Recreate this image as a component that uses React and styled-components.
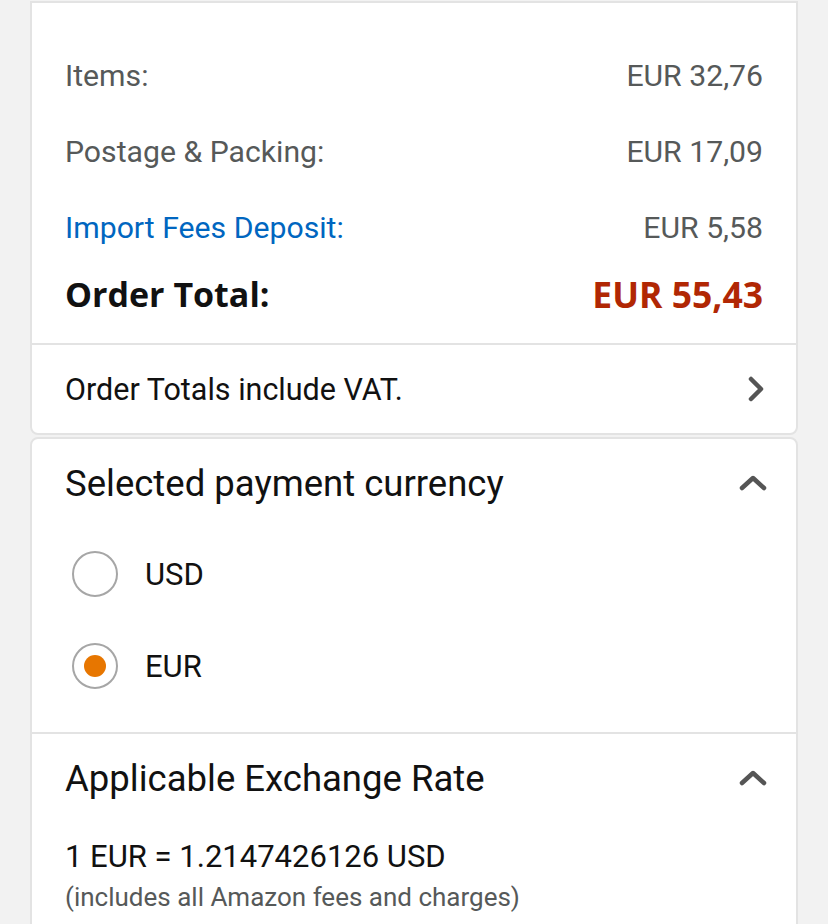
import React from "react";
import styled, { createGlobalStyle } from "styled-components";

const Global = createGlobalStyle`
  html, body { margin: 0; padding: 0; background: #f2f2f2; }
  body { font-family: Roboto, "Liberation Sans", sans-serif; -webkit-font-smoothing: antialiased; }
`;

const Page = styled.div`
  width: 828px;
  height: 924px;
  overflow: hidden;
  padding: 1px 30px 0 30px;
  box-sizing: border-box;
  display: flex;
  flex-direction: column;
  gap: 2px;
`;

const Card = styled.div`
  background: #fff;
  border: 2px solid #e3e3e3;
  border-radius: ${p => p.$top ? "0 0 8px 8px" : "8px 8px 0 0"};
  display: flex;
  flex-direction: column;
  flex-shrink: 0;
`;

const Summary = styled.div`
  padding: 34px 33px 20px 33px;
  display: flex;
  flex-direction: column;
`;

const Row = styled.div`
  display: flex;
  justify-content: space-between;
  align-items: center;
  height: ${p => p.$h || 76}px;
  font-family: ${p => p.$total ? '"Open Sans", Roboto, sans-serif' : 'Roboto, sans-serif'};
  font-size: ${p => p.$total ? 34 : 30.2}px;
  font-weight: ${p => p.$total ? 700 : 400};
  color: ${p => p.$total ? "#111" : "#565959"};
`;

const Label = styled.span`
  color: ${p => p.$link ? "#0066c0" : "inherit"};
`;

const Value = styled.span`
  color: ${p => p.$price ? "#b12704" : "inherit"};
  font-size: ${p => p.$price ? "35.5px" : "inherit"};
`;

const Divider = styled.div`
  height: 2px;
  background: #e3e3e3;
`;

const LinkRow = styled.div`
  height: 88px;
  padding: 0 33px;
  display: flex;
  align-items: center;
  justify-content: space-between;
  font-size: 30.5px;
  color: #111;
`;

const Section = styled.div`
  padding: 0 33px ${p => p.$pb || 0}px 33px;
  display: flex;
  flex-direction: column;
`;

const SectionHead = styled.div`
  height: 88px;
  display: flex;
  align-items: center;
  justify-content: space-between;
  font-size: 36.5px;
  color: #111;
`;

const RadioList = styled.div`
  display: flex;
  flex-direction: column;
  padding: 1px 0 20px 0;
`;

const RadioRow = styled.label`
  height: 92px;
  display: flex;
  align-items: center;
  gap: 27px;
  padding-left: 7px;
  font-size: 31px;
  color: #111;
`;

const Radio = styled.span`
  width: 46px;
  height: 46px;
  border-radius: 50%;
  border: 2px solid #a6a6a6;
  box-sizing: border-box;
  display: flex;
  align-items: center;
  justify-content: center;
  &::after {
    content: "";
    width: 22px;
    height: 22px;
    border-radius: 50%;
    background: ${p => p.$checked ? "#e77600" : "transparent"};
  }
`;

const RateLine = styled.div`
  margin-top: 15px;
  font-size: 31px;
  color: #111;
  line-height: 40px;
`;

const Note = styled.div`
  font-size: 26px;
  color: #565959;
  line-height: 40px;
`;

const IconBox = styled.span`
  display: flex;
  margin-right: ${p => p.$mr || 0}px;
`;

const Chevron = ({ dir }) =>
  dir === "up" ? (
    <IconBox $mr={-5}>
      <svg width="30" height="20" viewBox="0 0 30 20" fill="none">
        <path d="M4 15 L15 5 L26 15" stroke="#555" strokeWidth="4.5" strokeLinecap="round" strokeLinejoin="round" />
      </svg>
    </IconBox>
  ) : (
    <IconBox $mr={-3}>
      <svg width="20" height="28" viewBox="0 0 20 28" fill="none">
        <path d="M5 4 L15 14 L5 24" stroke="#555" strokeWidth="4.5" strokeLinecap="round" strokeLinejoin="round" />
      </svg>
    </IconBox>
  );

export default function App() {
  return (
    <>
      <Global />
      <Page>
        <Card $top>
          <Summary>
            <Row><Label>Items:</Label><Value>EUR 32,76</Value></Row>
            <Row><Label>Postage &amp; Packing:</Label><Value>EUR 17,09</Value></Row>
            <Row><Label $link>Import Fees Deposit:</Label><Value>EUR 5,58</Value></Row>
            <Row $total $h={58}><Label>Order Total:</Label><Value $price>EUR 55,43</Value></Row>
          </Summary>
          <Divider />
          <LinkRow>
            <span>Order Totals include VAT.</span>
            <Chevron dir="right" />
          </LinkRow>
        </Card>
        <Card>
          <Section>
            <SectionHead>
              <span>Selected payment currency</span>
              <Chevron dir="up" />
            </SectionHead>
            <RadioList>
              <RadioRow><Radio /><span>USD</span></RadioRow>
              <RadioRow><Radio $checked /><span>EUR</span></RadioRow>
            </RadioList>
          </Section>
          <Divider />
          <Section $pb={60}>
            <SectionHead>
              <span>Applicable Exchange Rate</span>
              <Chevron dir="up" />
            </SectionHead>
            <RateLine>1 EUR = 1.2147426126 USD</RateLine>
            <Note>(includes all Amazon fees and charges)</Note>
          </Section>
        </Card>
      </Page>
    </>
  );
}
